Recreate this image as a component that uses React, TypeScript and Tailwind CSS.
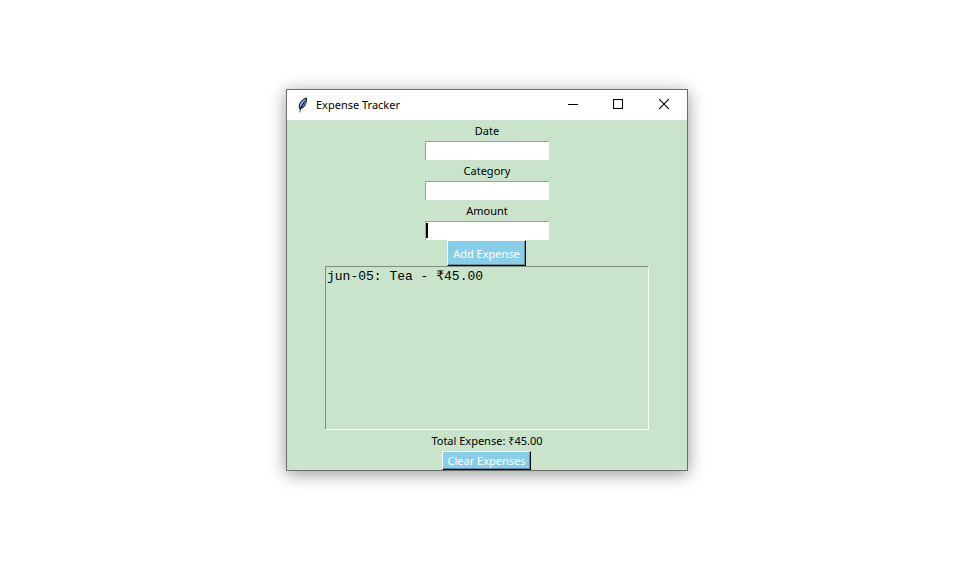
import { useState } from 'react';

const labelClass = 'block h-[21px] text-[11px] leading-[21px]';
const buttonClass =
  'mr-px block border border-t-white border-r-black border-b-black border-l-white bg-[#87ceeb] text-center text-[11px] leading-[17px] whitespace-nowrap text-white shadow-[inset_-1px_-1px_0_#5f93a8]';

function Feather() {
  return (
    <svg width="12" height="16" viewBox="0 0 12 16" aria-hidden="true">
      <path d="M9.8 0.6 C6.5 1.2 3.2 4.2 2 7.6 C1.5 9.4 1.7 11 2.6 12.6 C5.2 12 8 10 9.2 6.8 C10 4.6 10.5 2.4 9.8 0.6 Z" fill="#1d2a3d" />
      <path d="M8.8 1.8 C6 3 3.6 5.8 2.8 8.8 L2.9 11 L8 4 Z" fill="#6c9ccc" />
      <path d="M9.3 3 C9.2 6 7.8 8.8 4.2 10.8 L7 6.4 Z" fill="#5c88bb" />
      <path d="M7.6 4.4 C5.6 7 3.4 10 2.8 15.4" fill="none" stroke="#0b0f18" strokeWidth="0.8" />
      <path d="M7.6 3 C5.4 4.8 4.3 6.6 3.6 8.6" fill="none" stroke="#b4d2ee" strokeWidth="0.9" />
    </svg>
  );
}

function TitleBar() {
  return (
    <header className="flex h-[30px] items-center bg-white">
      <span className="ml-[10px] flex w-[19px]">
        <Feather />
      </span>
      <h1 className="flex-1 text-[11px]">Expense Tracker</h1>
      <button type="button" aria-label="Minimize" className="flex h-full w-[46px] items-center justify-center">
        <svg width="10" height="10" viewBox="0 0 10 10" shapeRendering="crispEdges">
          <rect x="0" y="4" width="10" height="1" />
        </svg>
      </button>
      <button type="button" aria-label="Maximize" className="flex h-full w-[45px] items-center justify-center">
        <svg width="11" height="12" viewBox="0 0 11 12" shapeRendering="crispEdges">
          <rect x="0.5" y="0.5" width="9" height="9" fill="none" stroke="#000" />
        </svg>
      </button>
      <button type="button" aria-label="Close" className="flex h-full w-[46px] items-center justify-center">
        <svg width="10" height="12" viewBox="0 0 10 12">
          <path d="M0 0 L10 10 M10 0 L0 10" stroke="#000" strokeWidth="1.1" />
        </svg>
      </button>
    </header>
  );
}

function Field({ id, label, active = false }: { id: string; label: string; active?: boolean }) {
  const [value, setValue] = useState('');
  return (
    <div className="relative w-[124px] text-center">
      <label htmlFor={id} className={labelClass}>
        {label}
      </label>
      <input
        id={id}
        type="text"
        value={value}
        onChange={(e) => setValue(e.target.value)}
        className="block h-[19px] w-full border-t border-l border-[#a0a0a0] bg-white px-1 text-[11px] outline-none"
      />
      {active && value === '' && <span className="absolute bottom-0.5 left-px h-[15px] w-0.5 bg-black" />}
    </div>
  );
}

export default function App() {
  return (
    <main className="flex min-h-screen items-center justify-center bg-white pb-4 pl-[10px] font-['Noto_Sans',sans-serif] text-black">
      <section className="w-full max-w-[402px] border border-[#6b6f6c] bg-[#c9e4ca] shadow-[0_3px_16px_rgba(0,0,0,0.42)]">
        <TitleBar />
        <form className="flex flex-col items-center" onSubmit={(e) => e.preventDefault()}>
          <Field id="date" label="Date" />
          <Field id="category" label="Category" />
          <Field id="amount" label="Amount" active />
          <button type="button" className={`${buttonClass} h-[26px] w-[79px]`}>
            Add Expense
          </button>
          <textarea
            aria-label="Expenses"
            readOnly
            value="jun-05: Tea - ₹45.00"
            className="block h-[164px] w-[324px] resize-none border border-t-[#7c8f7d] border-r-white border-b-white border-l-[#7c8f7d] bg-transparent px-px py-0.5 font-['Liberation_Mono',monospace] text-[13px] leading-[16px] outline-none"
          />
          <output className={labelClass}>Total Expense: ₹45.00</output>
          <button type="button" className={`${buttonClass} h-[19px] w-[89px]`}>
            Clear Expenses
          </button>
        </form>
      </section>
    </main>
  );
}
